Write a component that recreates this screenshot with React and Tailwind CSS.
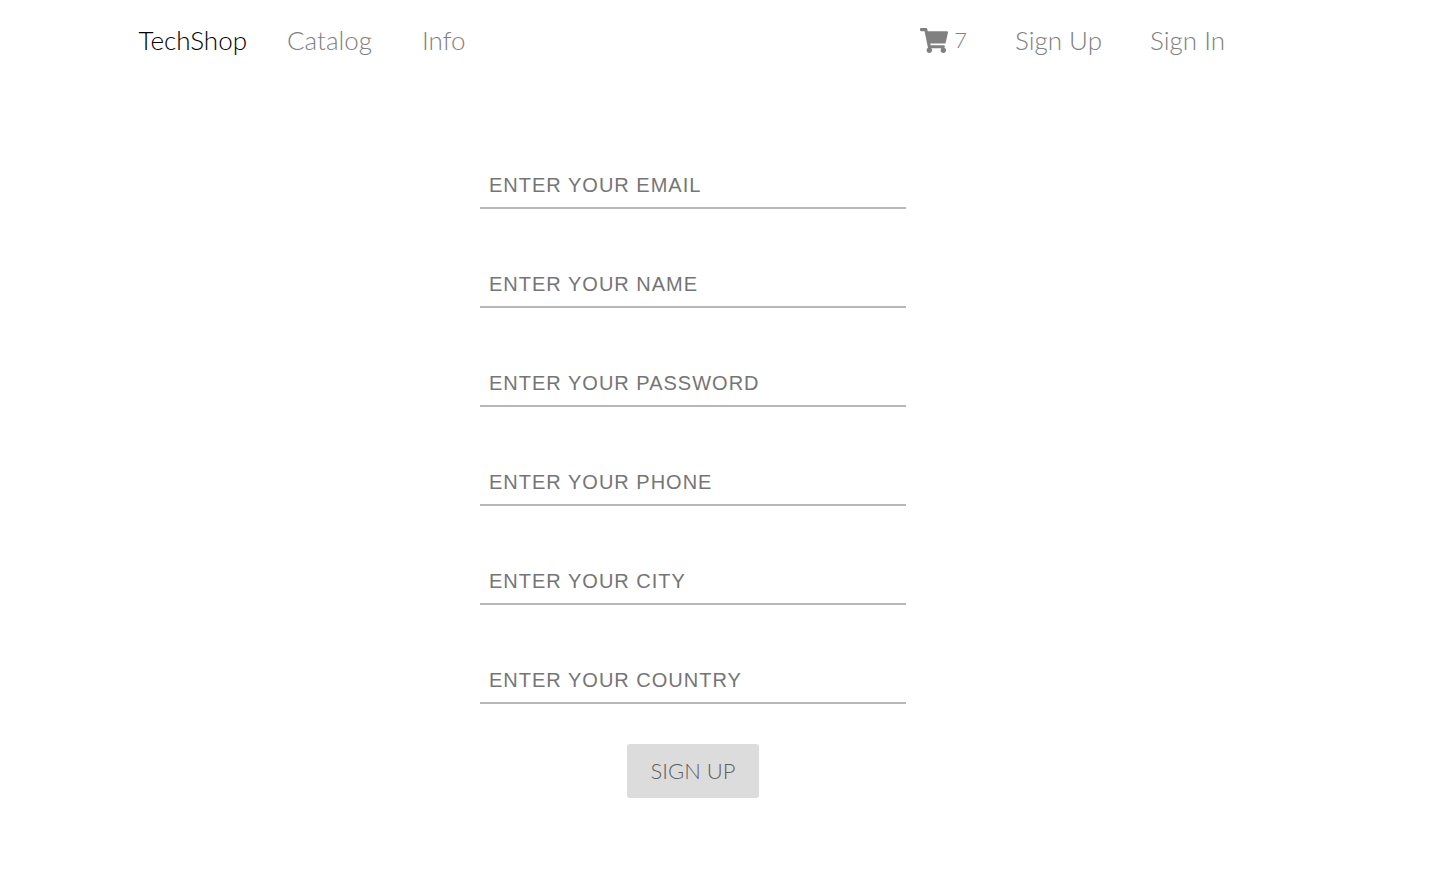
import React from "react";
import { FaShoppingCart } from "react-icons/fa";

const fields = [
  { name: "email", type: "email", label: "ENTER YOUR EMAIL" },
  { name: "name", type: "text", label: "ENTER YOUR NAME" },
  { name: "password", type: "password", label: "ENTER YOUR PASSWORD" },
  { name: "phone", type: "tel", label: "ENTER YOUR PHONE" },
  { name: "city", type: "text", label: "ENTER YOUR CITY" },
  { name: "country", type: "text", label: "ENTER YOUR COUNTRY" },
];

function Header() {
  return (
    <header className="flex items-center justify-between pl-[10%] pr-[161px] pt-6 text-[26px] leading-[32px] font-light text-[#808080] font-['Lato',sans-serif]">
      <nav aria-label="Main" className="flex items-center">
        <a href="#home" className="mr-10 text-black">TechShop</a>
        <a href="#catalog" className="mr-[50px]">Catalog</a>
        <a href="#info">Info</a>
      </nav>
      <nav aria-label="Account" className="flex items-center gap-12">
        <a href="#cart" aria-label="Cart, 7 items" className="flex items-center gap-[6px]">
          <FaShoppingCart className="h-[25px] w-[28px]" aria-hidden="true" />
          <span className="text-[22px]">7</span>
        </a>
        <a href="#sign-up">Sign Up</a>
        <a href="#sign-in">Sign In</a>
      </nav>
    </header>
  );
}

function SignUpForm() {
  return (
    <form
      className="mx-auto mt-[105px] flex max-w-[426px] flex-col items-center pb-16"
      onSubmit={(event) => event.preventDefault()}
    >
      <div className="flex w-full flex-col gap-[51px]">
        {fields.map((field) => (
          <input
            key={field.name}
            type={field.type}
            name={field.name}
            aria-label={field.label}
            placeholder={field.label}
            className="h-12 w-full border-b-2 border-[#b8b8b8] px-[9px] pt-[2px] text-[20px] tracking-wider outline-none placeholder:text-[#757575] font-['Liberation_Sans',Arial,sans-serif]"
          />
        ))}
      </div>
      <button
        type="submit"
        className="mt-10 rounded-[3px] bg-[#dcdcdc] px-6 py-3 text-[22px] leading-[30px] font-light text-[#606060] font-['Lato',sans-serif]"
      >
        SIGN UP
      </button>
    </form>
  );
}

export default function App() {
  return (
    <div className="min-h-screen bg-white pr-16">
      <Header />
      <main>
        <SignUpForm />
      </main>
    </div>
  );
}
